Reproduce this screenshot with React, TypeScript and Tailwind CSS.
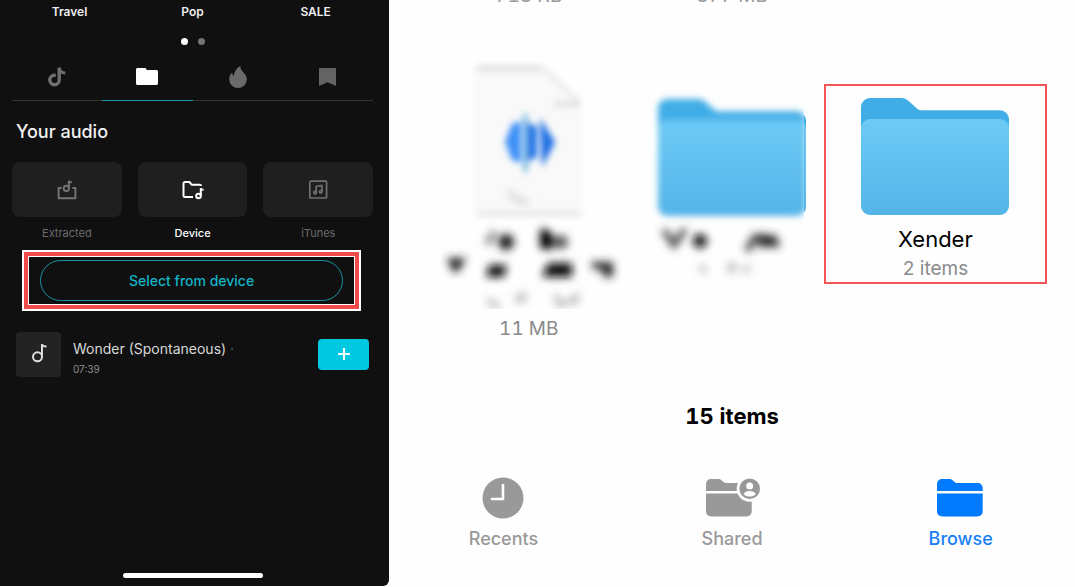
function TikTokIcon() {
  return (
    <svg viewBox="0 0 18 20" className="h-5 w-[18px]" fill="none" stroke="#6f6f6f" strokeWidth="3.4" aria-hidden="true">
      <path d="M11.2 .4V13a4.700 4.700 0 1 1-4.700-4.700h1.200" />
      <path d="M11.200 1c.4 3 2.600 4.800 6 5" strokeWidth="3" />
    </svg>
  );
}

function SolidFolderIcon() {
  return (
    <svg viewBox="0 0 22 17" className="h-[17px] w-[22px]" fill="#fff" aria-hidden="true">
      <path d="M1.5 0h7.3c.5 0 .8.1 1.1.5l1 1.4h9.600c.8 0 1.500.7 1.500 1.500v12.100c0 .8-.7 1.500-1.500 1.500h-19C.7 17 0 16.300 0 15.500V1.500C0 .7.7 0 1.500 0z" />
    </svg>
  );
}

function FlameIcon() {
  return (
    <svg viewBox="0 0 18 22" className="h-[22px] w-[18px]" fill="#6a6a6a" aria-hidden="true">
      <path d="M11.300 0c.2 3 1.200 4.300 3.200 6.500 2 2.200 3.300 4 3.300 6.700A8.800 8.800 0 0 1 9 22a8.800 8.800 0 0 1-8.800-8.800c0-2.800 1-4.800 2.900-6.700.3 1.500.7 2.700 1.600 3.600C5.200 5.600 7.600 2 11.300 0z" />
    </svg>
  );
}

function BookmarkIcon() {
  return (
    <svg viewBox="0 0 17 18" className="h-[18px] w-[17px]" fill="#636363" aria-hidden="true">
      <path d="M1.200 0h14.600c.7 0 1.200.5 1.200 1.200V18l-8.500-3.800L0 18V1.200C0 .5.5 0 1.200 0z" />
    </svg>
  );
}

function ExtractedIcon() {
  return (
    <svg viewBox="0 0 20 20" className="size-5" fill="none" stroke="#757575" strokeWidth="1.900" aria-hidden="true">
      <path d="M4.600 8H1.600v10.200h16.800V8h-3" strokeLinejoin="round" />
      <circle cx="9.300" cy="8.400" r="2.600" />
      <path d="M11.900 8.400V.8c.5 1 1.500 1.400 3 1.400" />
    </svg>
  );
}

function DeviceIcon() {
  return (
    <svg viewBox="0 0 22 20" className="h-5 w-[22px]" fill="none" stroke="#fff" strokeWidth="2" aria-hidden="true">
      <path d="M11 17H2.800A1.300 1.300 0 0 1 1.500 15.700V3.300A1.300 1.300 0 0 1 2.800 2h4.600l2.200 2.700h8.100A1.300 1.300 0 0 1 19 6" strokeLinejoin="round" />
      <circle cx="16.500" cy="16" r="2.300" />
      <path d="M18.800 16V8.300c.4 1 1.300 1.500 2.800 1.500" />
    </svg>
  );
}

function ItunesIcon() {
  return (
    <svg viewBox="0 0 20 20" className="size-5" fill="none" stroke="#707070" strokeWidth="1.700" aria-hidden="true">
      <rect x="1.800" y="1.200" width="16.800" height="16.800" rx="1" />
      <path d="M8.200 12.600V6.400l5.600-1v6.300" />
      <circle cx="7.100" cy="12.700" r="1.300" />
      <circle cx="12.700" cy="11.800" r="1.300" />
    </svg>
  );
}

function BigFolder() {
  return (
    <>
      <path d="M0 30V9a9 9 0 0 1 9-9h31c3 0 5 .8 7 2.600l9 8c1.400 1.300 2.300 1.700 4 1.700h79a9 9 0 0 1 9 9V34z" fill="#41ade6" />
      <path d="M0 30a9 9 0 0 1 9-9h130a9 9 0 0 1 9 9v78a9 9 0 0 1-9 9H9a9 9 0 0 1-9-9z" fill="url(#folder-face)" />
    </>
  );
}

function FolderGradient() {
  return (
    <linearGradient id="folder-face" x1="0" y1="0" x2="0" y2="1">
      <stop offset="0" stopColor="#6dcaf6" />
      <stop offset="1" stopColor="#53b4e8" />
    </linearGradient>
  );
}

function BlurredDocument() {
  return (
    <svg viewBox="0 52 200 256" className="h-64 w-[200px]" aria-hidden="true">
      <defs>
        <filter id="soft" x="-30%" y="-30%" width="160%" height="160%">
          <feGaussianBlur stdDeviation="3" />
        </filter>
        <filter id="line-blur" filterUnits="userSpaceOnUse" x="0" y="40" width="200" height="270">
          <feGaussianBlur stdDeviation="3" />
        </filter>
        <filter id="softer" x="-30%" y="-30%" width="160%" height="160%">
          <feGaussianBlur stdDeviation="4" />
        </filter>
      </defs>
      <g filter="url(#line-blur)">
        <path d="M43 67h72l38 38v109H43z" fill="#f9f9f9" />
        <path d="M48 67h65" stroke="#dcdcdc" strokeWidth="5" />
        <path d="M115 68l36 34" stroke="#e6e6e6" strokeWidth="4" />
        <path d="M125 103h27" stroke="#dcdcdc" strokeWidth="5" />
        <path d="M48 213h104" stroke="#e4e4e4" strokeWidth="5" />
      </g>
      <g filter="url(#soft)">
        <path d="M92 120l-9 3-7 18 7 18 9 3z" fill="#3d90f8" />
        <path d="M94 113h5v58h-5z" fill="#7dbde0" />
        <path d="M98 121l10 5v30l-10 5z" fill="#1f74e6" />
        <path d="M111 117l5 8 10 16-8 16-5 9z" fill="#1f6ee2" />
      </g>
      <g filter="url(#softer)">
        <path d="M79 191l8 7 12 4" stroke="#c8c8c8" strokeWidth="4" fill="none" />
        <path d="M58 243l8-12" stroke="#888" strokeWidth="7" />
        <circle cx="77" cy="241" r="8" fill="#1c1c1c" />
        <path d="M111 228h6l8 7v13h-14z" fill="#050505" />
        <circle cx="132" cy="241" r="7" fill="#555" />
        <path d="M18 257h19l-8 14h-5z" fill="#222" />
        <path d="M60 264h18l-3 12H57z" fill="#0c0c0c" />
        <path d="M119 262h24v14h-30z" fill="#0c0c0c" />
        <path d="M162 261h22v15h-9l-3-8h-8z" fill="#262626" />
        <path d="M58 299l12 7M86 299l8-5v8M126 294l5 10 6-4M139 302l8-6v7" stroke="#b4b4b4" strokeWidth="5" fill="none" />
      </g>
    </svg>
  );
}

function BlurredFolder() {
  return (
    <svg viewBox="-10 -10 168 200" className="h-[200px] w-[168px]" aria-hidden="true">
      <defs>
        <FolderGradient />
        <clipPath id="blur-area">
          <rect x="-10" y="-10" width="156" height="200" />
        </clipPath>
        <filter id="folder-blur" x="-10%" y="-10%" width="120%" height="120%">
          <feGaussianBlur stdDeviation="3" />
        </filter>
        <filter id="name-blur" x="-20%" y="-40%" width="140%" height="180%">
          <feGaussianBlur stdDeviation="4" />
        </filter>
      </defs>
      <svg x="146" y="0" width="2" height="117" viewBox="146 0 2 117">
        <BigFolder />
      </svg>
      <g clipPath="url(#blur-area)">
        <rect x="-10" y="-10" width="156" height="200" fill="#fefefe" />
        <g filter="url(#folder-blur)">
          <BigFolder />
        </g>
        <g filter="url(#name-blur)" fill="none">
          <path d="M6 131l10 15 11-16" stroke="#444" strokeWidth="6" />
          <circle cx="42" cy="142" r="7" fill="#111" />
          <path d="M89 152l8-14h8v9" stroke="#333" strokeWidth="6" />
          <path d="M100 136h18l4 12h-22z" fill="#292929" />
          <path d="M43 166l4 8M70 173l4-7 5 5M87 174l3-8" stroke="#b5b5b5" strokeWidth="5" />
        </g>
      </g>
    </svg>
  );
}

function SharpFolder() {
  return (
    <svg viewBox="0 0 148 117" className="h-[117px] w-[148px]" aria-hidden="true">
      <BigFolder />
    </svg>
  );
}

function ClockIcon() {
  return (
    <svg viewBox="0 0 42 42" className="size-[42px]" aria-hidden="true">
      <circle cx="21" cy="21" r="20.500" fill="#999" />
      <path d="M21 8v14H10" fill="none" stroke="#fff" strokeWidth="2.600" strokeLinecap="round" strokeLinejoin="round" />
    </svg>
  );
}

function TabFolderShape() {
  return (
    <path d="M0 12V5.500C0 2 2 0 5.500 0h6.200c1.800 0 2.800.4 4.200 1.600l1.400 1.200c1 .9 1.800 1.200 3.200 1.200H40c3.700 0 5.700 2 5.700 5.500V12zM0 14.500h45.700V32c0 3.500-2 5.400-5.500 5.400H5.500C2 37.400 0 35.500 0 32z" />
  );
}

function SharedIcon() {
  return (
    <svg viewBox="-4 -2 60 42" className="h-[42px] w-[60px]" fill="#999" aria-hidden="true">
      <TabFolderShape />
      <circle cx="43.700" cy="9.700" r="13" fill="#fefefe" />
      <circle cx="43.700" cy="9.700" r="10.300" />
      <circle cx="43.700" cy="6.900" r="3.500" fill="#fefefe" />
      <path d="M37.600 15.200c1-2.200 3-3.100 6.100-3.100s5.100.9 6.100 3.100c-1.600 1.700-3.600 2.400-6.100 2.400s-4.500-.7-6.100-2.400z" fill="#fefefe" />
    </svg>
  );
}

function BrowseIcon() {
  return (
    <svg viewBox="0 -2 48 42" className="h-[42px] w-12" fill="#007aff" aria-hidden="true">
      <TabFolderShape />
    </svg>
  );
}

const tabs = [
  { name: "TikTok sounds", icon: <TikTokIcon />, active: false },
  { name: "Your audio", icon: <SolidFolderIcon />, active: true },
  { name: "Trending", icon: <FlameIcon />, active: false },
  { name: "Saved", icon: <BookmarkIcon />, active: false },
];

const sources = [
  { name: "Extracted", icon: <ExtractedIcon />, active: false },
  { name: "Device", icon: <DeviceIcon />, active: true },
  { name: "iTunes", icon: <ItunesIcon />, active: false },
];

function AudioPanel() {
  return (
    <section className="mb-px flex w-[36.2%] flex-col rounded-br-md bg-[#101010] pt-1 pr-4 pb-2 pl-3 text-white">
      <div className="-mx-1 grid grid-cols-3 text-center text-xs leading-4 font-semibold text-[#ececec]">
        <span>Travel</span>
        <span>Pop</span>
        <span>SALE</span>
      </div>
      <div className="mt-[18px] flex justify-center gap-2.5">
        <span className="size-[7px] rounded-full bg-white" />
        <span className="size-[7px] rounded-full bg-[#737373]" />
      </div>
      <nav className="mt-2 grid h-12 grid-cols-4">
        {tabs.map((t) => (
          <button
            key={t.name}
            aria-label={t.name}
            className={`flex items-center justify-center border-b ${t.active ? "border-[#1598a8]" : "border-[#333]"}`}
          >
            {t.icon}
          </button>
        ))}
      </nav>
      <h2 className="mt-[19px] px-1 text-lg leading-6 font-medium text-[#f2f2f2]">Your audio</h2>
      <div className="mt-[18px] grid grid-cols-3 gap-4">
        {sources.map((s) => (
          <button key={s.name} className="flex flex-col gap-2">
            <span className="flex h-[55px] w-full items-center justify-center rounded-lg bg-[#1f1f1f]">{s.icon}</span>
            <span className={`w-full text-center text-[11px] leading-4 ${s.active ? "font-medium text-white" : "text-[#6c6c6c]"}`}>
              {s.name}
            </span>
          </button>
        ))}
      </div>
      <div className="mt-[9px] mr-3 ml-2.5 border-2 border-white bg-[#f04a4a] p-1">
        <div className="border border-white bg-[#101010] px-[11px] py-[3px]">
          <button className="h-[41px] w-full rounded-full border border-[#1b93a3] text-sm font-medium text-[#12b4c8]">
            Select from device
          </button>
        </div>
      </div>
      <div className="mt-[18px] flex items-center px-1">
        <span className="flex size-[45px] shrink-0 items-center justify-center rounded-sm bg-[#232323]">
          <svg viewBox="0 0 16 20" className="h-5 w-4" fill="none" stroke="#dcdcdc" strokeWidth="2" aria-hidden="true">
            <circle cx="6.500" cy="12.800" r="4.500" />
            <path d="M11 12.800V.8c.7 1.200 2 1.700 4.500 1.700" />
          </svg>
        </span>
        <div className="ml-3 min-w-0 flex-1 pt-2.5">
          <p className="text-sm leading-5 text-[#d8d8d8]">
            Wonder (Spontaneous) <span className="text-[#666]">·</span>
          </p>
          <p className="text-[10px] leading-5 text-[#8f8f8f]">07:39</p>
        </div>
        <button aria-label="Add" className="flex h-[31px] w-[51px] items-center justify-center rounded-sm bg-[#00c8e0]">
          <svg viewBox="0 0 12 12" className="size-3" stroke="#fff" strokeWidth="2" aria-hidden="true">
            <path d="M6 0v12M0 6h12" />
          </svg>
        </button>
      </div>
      <div className="mt-auto h-[5px] w-[140px] self-center rounded-full bg-white" />
    </section>
  );
}

function FilesPanel() {
  return (
    <section className="flex flex-1 flex-col bg-[#fefefe] tabular-nums">
      <div className="grid grid-cols-3 overflow-hidden px-[38px] text-center text-[19px] leading-6 text-[#9a9a9a]">
        <span className="-mt-4">718 KB</span>
        <span className="-mt-4">877 MB</span>
      </div>
      <div className="mt-[45px] grid grid-cols-3 px-[38px] text-center">
        <div className="flex flex-col items-center">
          <BlurredDocument />
          <span className="mt-2 text-[19px] leading-6 text-[#8a8a8a]">11 MB</span>
        </div>
        <div className="flex flex-col items-center pt-9">
          <BlurredFolder />
        </div>
        <button className="relative flex flex-col items-center self-start pt-[45px]">
          <span className="absolute -inset-x-2.5 top-[31px] -bottom-[3px] border-2 border-[#f25555]" />
          <SharpFolder />
          <span className="mt-2.5 text-[22px] leading-7 text-black">Xender</span>
          <span className="mt-1 text-[19px] leading-6 text-[#8a8a8a]">2 items</span>
        </button>
      </div>
      <p className="mt-auto pt-4 text-center text-[22px] leading-8 font-bold text-black">15 items</p>
      <nav className="mt-[45px] mb-9 grid grid-cols-3 text-lg leading-6 font-medium text-[#999]">
        <button className="flex flex-col items-center gap-2">
          <ClockIcon />
          Recents
        </button>
        <button className="flex flex-col items-center gap-2">
          <SharedIcon />
          Shared
        </button>
        <button className="flex flex-col items-center gap-2 text-[#1a7ff5]">
          <BrowseIcon />
          Browse
        </button>
      </nav>
    </section>
  );
}

export default function App() {
  return (
    <main className="flex min-h-screen bg-[#fefefe] font-['Inter',sans-serif]">
      <AudioPanel />
      <FilesPanel />
    </main>
  );
}
